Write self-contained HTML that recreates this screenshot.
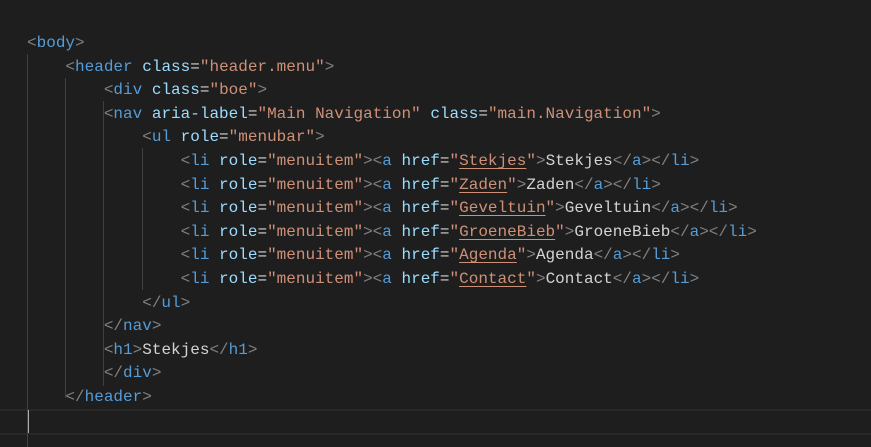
<!DOCTYPE html>
<html><head><meta charset="utf-8"><style>
html,body{margin:0;padding:0;background:#1e1e1e;width:871px;height:447px;overflow:hidden}
.ed{position:relative;width:871px;height:447px;font-family:"Liberation Mono",monospace;font-size:16px;color:#d4d4d4}
.l{position:absolute;left:27px;height:23.6px;line-height:23.6px;white-space:pre;margin-top:2px}
.p{color:#808080}.t{color:#569cd6}.a{color:#9cdcfe}.s{color:#ce9178}
.u{text-decoration:underline;text-underline-offset:3px;text-decoration-thickness:1px}
.g{position:absolute;width:1px;background:#404040}
.cur{position:absolute;left:0;top:409px;width:871px;height:22px;border-top:2px solid #282828;border-bottom:2px solid #282828}
.caret{position:absolute;left:27px;top:410px;width:2px;height:23px;background:#aeafad}
</style></head><body><div class="ed">
<div class="cur"></div><div class="caret"></div>
<div class="g" style="left:27px;top:54px;height:393px"></div>
<div class="g" style="left:65px;top:78px;height:320px"></div>
<div class="g" style="left:103px;top:101px;height:285px"></div>
<div class="g" style="left:142px;top:148px;height:142px"></div>
<div class="l" style="top:-12px"><span class="p" style="margin-left:8px">`</span></div>
<div class="l" style="top:30px"><span class="p">&lt;</span><span class="t">body</span><span class="p">&gt;</span></div>
<div class="l" style="top:53.6px">    <span class="p">&lt;</span><span class="t">header</span> <span class="a">class</span>=<span class="s">"header.menu"</span><span class="p">&gt;</span></div>
<div class="l" style="top:77.2px">        <span class="p">&lt;</span><span class="t">div</span> <span class="a">class</span>=<span class="s">"boe"</span><span class="p">&gt;</span></div>
<div class="l" style="top:100.8px">        <span class="p">&lt;</span><span class="t">nav</span> <span class="a">aria-label</span>=<span class="s">"Main Navigation"</span> <span class="a">class</span>=<span class="s">"main.Navigation"</span><span class="p">&gt;</span></div>
<div class="l" style="top:124.4px">            <span class="p">&lt;</span><span class="t">ul</span> <span class="a">role</span>=<span class="s">"menubar"</span><span class="p">&gt;</span></div>
<div class="l" style="top:148px">                <span class="p">&lt;</span><span class="t">li</span> <span class="a">role</span>=<span class="s">"menuitem"</span><span class="p">&gt;&lt;</span><span class="t">a</span> <span class="a">href</span>=<span class="s">"<span class="u">Stekjes</span>"</span><span class="p">&gt;</span>Stekjes<span class="p">&lt;/</span><span class="t">a</span><span class="p">&gt;&lt;/</span><span class="t">li</span><span class="p">&gt;</span></div>
<div class="l" style="top:171.6px">                <span class="p">&lt;</span><span class="t">li</span> <span class="a">role</span>=<span class="s">"menuitem"</span><span class="p">&gt;&lt;</span><span class="t">a</span> <span class="a">href</span>=<span class="s">"<span class="u">Zaden</span>"</span><span class="p">&gt;</span>Zaden<span class="p">&lt;/</span><span class="t">a</span><span class="p">&gt;&lt;/</span><span class="t">li</span><span class="p">&gt;</span></div>
<div class="l" style="top:195.2px">                <span class="p">&lt;</span><span class="t">li</span> <span class="a">role</span>=<span class="s">"menuitem"</span><span class="p">&gt;&lt;</span><span class="t">a</span> <span class="a">href</span>=<span class="s">"<span class="u">Geveltuin</span>"</span><span class="p">&gt;</span>Geveltuin<span class="p">&lt;/</span><span class="t">a</span><span class="p">&gt;&lt;/</span><span class="t">li</span><span class="p">&gt;</span></div>
<div class="l" style="top:218.8px">                <span class="p">&lt;</span><span class="t">li</span> <span class="a">role</span>=<span class="s">"menuitem"</span><span class="p">&gt;&lt;</span><span class="t">a</span> <span class="a">href</span>=<span class="s">"<span class="u">GroeneBieb</span>"</span><span class="p">&gt;</span>GroeneBieb<span class="p">&lt;/</span><span class="t">a</span><span class="p">&gt;&lt;/</span><span class="t">li</span><span class="p">&gt;</span></div>
<div class="l" style="top:242.4px">                <span class="p">&lt;</span><span class="t">li</span> <span class="a">role</span>=<span class="s">"menuitem"</span><span class="p">&gt;&lt;</span><span class="t">a</span> <span class="a">href</span>=<span class="s">"<span class="u">Agenda</span>"</span><span class="p">&gt;</span>Agenda<span class="p">&lt;/</span><span class="t">a</span><span class="p">&gt;&lt;/</span><span class="t">li</span><span class="p">&gt;</span></div>
<div class="l" style="top:266px">                <span class="p">&lt;</span><span class="t">li</span> <span class="a">role</span>=<span class="s">"menuitem"</span><span class="p">&gt;&lt;</span><span class="t">a</span> <span class="a">href</span>=<span class="s">"<span class="u">Contact</span>"</span><span class="p">&gt;</span>Contact<span class="p">&lt;/</span><span class="t">a</span><span class="p">&gt;&lt;/</span><span class="t">li</span><span class="p">&gt;</span></div>
<div class="l" style="top:289.6px">            <span class="p">&lt;/</span><span class="t">ul</span><span class="p">&gt;</span></div>
<div class="l" style="top:313.2px">        <span class="p">&lt;/</span><span class="t">nav</span><span class="p">&gt;</span></div>
<div class="l" style="top:336.8px">        <span class="p">&lt;</span><span class="t">h1</span><span class="p">&gt;</span>Stekjes<span class="p">&lt;/</span><span class="t">h1</span><span class="p">&gt;</span></div>
<div class="l" style="top:360.4px">        <span class="p">&lt;/</span><span class="t">div</span><span class="p">&gt;</span></div>
<div class="l" style="top:384px">    <span class="p">&lt;/</span><span class="t">header</span><span class="p">&gt;</span></div>
</div></body></html>
